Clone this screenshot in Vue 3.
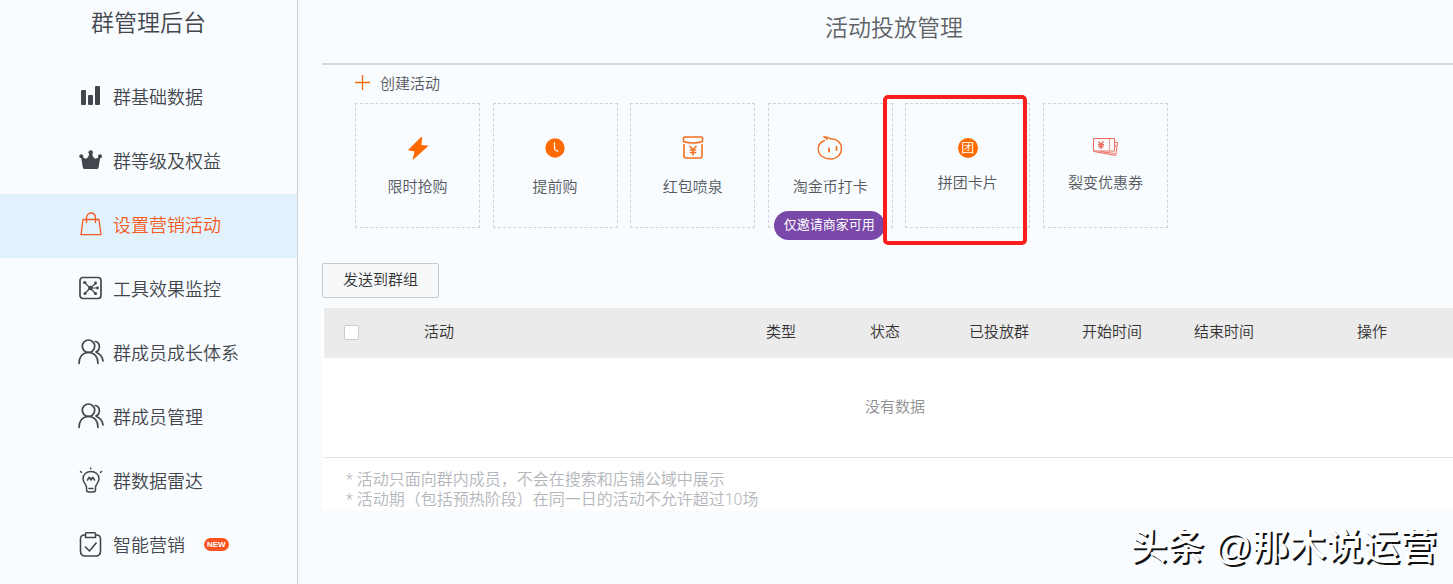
<template>
  <div class="layout">
    <aside class="sidebar">
      <h1 class="logo">群管理后台</h1>
      <nav>
        <a
          v-for="item in menu"
          :key="item.label"
          href="#"
          class="menu-item"
          :class="{ active: item.label === current }"
          @click.prevent="current = item.label"
        >
          <svg v-if="item.icon === 'chart'" class="menu-icon" viewBox="0 0 26 26">
            <g fill="currentColor">
              <rect x="3" y="7" width="5" height="15" rx="1" />
              <rect x="10" y="12" width="5" height="10" rx="1" />
              <rect x="17" y="3" width="5" height="19" rx="1" />
            </g>
          </svg>
          <svg v-else-if="item.icon === 'crown'" class="menu-icon" viewBox="0 0 26 26">
            <g fill="currentColor">
              <circle cx="12.700" cy="5.500" r="2.300" />
              <circle cx="3.300" cy="9.300" r="2" />
              <circle cx="22" cy="9.300" r="2" />
              <path d="M3 9.500l4.700 2.300c1.600-.3 3-2.300 3.700-5.300h2.600c.7 3 2 5 3.700 5.300L22.400 9.500 20.600 20.500q-.3 1.500-1.700 1.500H6.500q-1.400 0-1.700-1.500z" />
            </g>
          </svg>
          <svg v-else-if="item.icon === 'bag'" class="menu-icon" viewBox="0 0 26 26">
            <g fill="none" stroke="currentColor" stroke-width="1.300" stroke-linejoin="round" stroke-linecap="round">
              <path d="M5 8.500h16l2 15.200H3z" />
              <path d="M8.500 11.500V7.200C8.500 4 10.300 2 13 2s4.500 2 4.500 5.200v4.300" />
            </g>
          </svg>
          <svg v-else-if="item.icon === 'tool'" class="menu-icon" viewBox="0 0 26 26">
            <rect x="2" y="2.500" width="21" height="21" rx="3" fill="none" stroke="currentColor" stroke-width="1.700" />
            <path d="M6.500 7.500L12 13l6.500-5M12 13l-5 5.500M12 13l6 6M12 13h8" fill="none" stroke="currentColor" stroke-width="1.200" />
            <g fill="currentColor">
              <circle cx="12.500" cy="13" r="2.300" />
              <circle cx="6.700" cy="7.500" r="1.600" />
              <circle cx="17.500" cy="8" r="1.400" />
              <circle cx="7" cy="18.500" r="1.500" />
              <circle cx="17.500" cy="18.500" r="1.600" />
              <circle cx="19.500" cy="13" r="1.400" />
            </g>
          </svg>
          <svg v-else-if="item.icon === 'users'" class="menu-icon" viewBox="0 0 26 26">
            <g fill="none" stroke="currentColor" stroke-width="1.700" stroke-linecap="round">
              <circle cx="10.500" cy="7.200" r="6.200" />
              <path d="M1 24.500c0-6.500 3.500-11 9.500-11s9.500 4.500 9.500 11" />
              <path d="M17.300 2.500c5 .7 5.500 8.500.7 10.500M18.500 13.500c4 1.500 6 4.500 6.500 8.500" />
            </g>
          </svg>
          <svg v-else-if="item.icon === 'bulb'" class="menu-icon" viewBox="0 0 26 26">
            <g fill="none" stroke="currentColor" stroke-width="1.500" stroke-linecap="round" stroke-linejoin="round">
              <path d="M8.500 20.500C8.500 17 5 16 5 11.800 5 7.500 8.500 4.500 13 4.500s8 3 8 7.300c0 4.200-3.500 5.200-3.500 8.700v2q0 2.500-2.500 2.500h-4q-2.500 0-2.500-2.500z" />
              <path d="M9.500 13l1.800-2.800L13 13l1.700-2.800L16.500 13M11 21.500h4" />
              <path d="M12.700 1v.7M2.500 4.500l1 .8M23.500 4.500l-1 .8" />
            </g>
          </svg>
          <svg v-else class="menu-icon" viewBox="0 0 26 26">
            <g fill="none" stroke="currentColor" stroke-width="1.600" stroke-linejoin="round">
              <path d="M8 4H6.500Q2.500 4 2.500 8v12q0 5 5 5h10q5 0 5-5V8q0-4-4-4H17" />
              <path d="M8.500 1.800h8q1 0 1 1v3.700H7.500V2.800q0-1 1-1z" />
              <path d="M7 15.500l4.500 4.500 7-8.500" />
            </g>
          </svg>
          <span>{{ item.label }}</span>
          <em v-if="item.isNew" class="new-tag">NEW</em>
        </a>
      </nav>
    </aside>

    <main class="main">
      <div class="page">
        <header class="page-header">
          <h2>活动投放管理</h2>
        </header>

        <section class="create">
          <h3 class="create-title">
            <svg class="plus" viewBox="0 0 15 15"><path d="M7.500 0v15M0 7.500h15" stroke="#f56a0b" stroke-width="1.300" /></svg>
            创建活动
          </h3>
          <div class="cards">
            <button v-for="card in cards" :key="card.label" type="button" class="card" :class="card.icon">
              <svg v-if="card.icon === 'flash'" class="card-icon" viewBox="0 0 26 26">
                <path d="M15.800 2.300L3.500 14.600q-.4.700.4.900l5.700.9-2 7.500q.2.900 1 .4L22.800 11.400q.5-.8-.4-.9l-6.100-.4.900-7.300q-.3-1.100-1.400-.5z" fill="#ff6a00" />
              </svg>
              <svg v-else-if="card.icon === 'clock'" class="card-icon" viewBox="0 0 26 26">
                <circle cx="13" cy="13" r="9.700" fill="#ff6a00" />
                <path d="M12.500 8v5.200q.2 2 3.300 3" fill="none" stroke="#fff" stroke-width="1.300" stroke-linecap="round" />
              </svg>
              <svg v-else-if="card.icon === 'packet'" class="card-icon" viewBox="0 0 26 26">
                <g fill="none" stroke="#f37021" stroke-width="1.600" stroke-linejoin="round" stroke-linecap="round">
                  <path d="M4.500 2h17q1 0 1 1v3.500Q18 8 13 8T3.500 6.500V3q0-1 1-1z" />
                  <path d="M4 9.500V21q0 2 2 2h14q2 0 2-2V9.500" />
                  <path d="M10 11.500l3 3 3-3M13 14.500V20M10.500 15h5M10.500 17.500h5" />
                </g>
              </svg>
              <svg v-else-if="card.icon === 'coin'" class="card-icon" viewBox="0 0 26 26">
                <g fill="none" stroke="#f37021" stroke-width="1.400" stroke-linecap="round">
                  <path d="M7.500 5.500C3 7.500 1 11 1.300 14.500 1.700 20.500 7 24 13.500 24c6.300 0 11-4.300 11-10.500 0-6-4.700-9.700-10-9.500-2.500-.2-4.500-3-8-2 2.500.2 2.300 1.800 3.800 2.300" />
                  <path d="M12 13.500v3M19.500 12v3" stroke-width="1.800" />
                </g>
              </svg>
              <span v-else-if="card.icon === 'group'" class="group-icon">团</span>
              <svg v-else class="card-icon" viewBox="0 0 26 26">
                <g fill="none" stroke="#ee6a5c" stroke-width="1" stroke-linejoin="round">
                  <path d="M1.500 3.500h21V16H1.500z" />
                  <path d="M17.500 3.500V16" stroke-dasharray="2 1" />
                  <path d="M23 7l2.500.6L23.700 20.500 2 16.500M22.700 11l2 .3M22.500 18.500L8 16.500" />
                  <path d="M6.500 6.500L9 9.500l2.500-3M9 9.500V14M6 9.700h6M6.500 11.800h5" stroke-width="1.400" />
                </g>
              </svg>
              <span class="card-label">{{ card.label }}</span>
              <span v-if="card.badge" class="badge">{{ card.badge }}</span>
              <i v-if="card.marked" class="marker"></i>
            </button>
          </div>
        </section>

        <button type="button" class="send-btn">发送到群组</button>

        <section class="panel">
          <table class="table">
            <colgroup>
              <col class="col-check" />
              <col />
              <col class="col-type" />
              <col class="col-status" />
              <col class="col-groups" />
              <col class="col-start" />
              <col class="col-end" />
              <col class="col-action" />
            </colgroup>
            <thead>
              <tr>
                <th><input v-model="allChecked" type="checkbox" aria-label="全选" /></th>
                <th class="name">活动</th>
                <th v-for="col in columns" :key="col">{{ col }}</th>
              </tr>
            </thead>
            <tbody>
              <tr>
                <td colspan="8">没有数据</td>
              </tr>
            </tbody>
          </table>
          <div class="notes">
            <p>* 活动只面向群内成员，不会在搜索和店铺公域中展示</p>
            <p>* 活动期（包括预热阶段）在同一日的活动不允许超过10场</p>
          </div>
        </section>
      </div>
    </main>

    <div class="watermark">头条 @那木说运营</div>
  </div>
</template>

<script setup>
import { ref } from 'vue'

const current = ref('设置营销活动')
const allChecked = ref(false)

const menu = [
  { label: '群基础数据', icon: 'chart' },
  { label: '群等级及权益', icon: 'crown' },
  { label: '设置营销活动', icon: 'bag' },
  { label: '工具效果监控', icon: 'tool' },
  { label: '群成员成长体系', icon: 'users' },
  { label: '群成员管理', icon: 'users' },
  { label: '群数据雷达', icon: 'bulb' },
  { label: '智能营销', icon: 'clipboard', isNew: true }
]

const cards = [
  { label: '限时抢购', icon: 'flash' },
  { label: '提前购', icon: 'clock' },
  { label: '红包喷泉', icon: 'packet' },
  { label: '淘金币打卡', icon: 'coin', badge: '仅邀请商家可用' },
  { label: '拼团卡片', icon: 'group', marked: true },
  { label: '裂变优惠券', icon: 'coupon' }
]

const columns = ['类型', '状态', '已投放群', '开始时间', '结束时间', '操作']
</script>

<style>
body {
  background: #f8fcff;
}
</style>

<style scoped>
.layout {
  position: relative;
  display: flex;
  min-height: 100vh;
  overflow: hidden;
  background: #f8fcff;
  color: #43474d;
  font-family: "Noto Sans CJK SC", "Liberation Sans", sans-serif;
  font-weight: 350;
}

.layout * {
  box-sizing: border-box;
}

h1,
h2,
h3,
p {
  margin: 0;
  font-weight: 350;
}

button {
  font: inherit;
  color: inherit;
  cursor: pointer;
}

.sidebar {
  flex: 0 0 298px;
  border-right: 1px solid #cdd2d8;
}

.logo {
  height: 66px;
  padding-top: 3px;
  text-align: center;
  font-size: 23px;
  line-height: 36px;
}

.menu-item {
  display: flex;
  align-items: center;
  height: 64px;
  padding: 0 0 4px 78px;
  font-size: 18px;
  color: #43474d;
  text-decoration: none;
}

.menu-item.active {
  background: #e2f2fd;
  color: #f55a23;
}

.menu-icon {
  width: 26px;
  height: 26px;
  margin-right: 9px;
}

.new-tag {
  margin-left: 19px;
  padding: 0 3px;
  border-radius: 7px;
  background: #f9541f;
  color: #fff;
  font: bold 8px/13px "Liberation Sans", sans-serif;
}

.main {
  flex: 1;
  min-width: 0;
  padding-left: 24px;
}

.page {
  margin-right: -13px;
}

.page-header {
  height: 65px;
  padding-top: 8px;
  border-bottom: 2px solid #d0d6dc;
  text-align: center;
  color: #606266;
}

.page-header h2 {
  font-size: 23px;
  line-height: 36px;
}

.create {
  padding-left: 33px;
}

.create-title {
  display: flex;
  align-items: center;
  height: 38px;
  padding-bottom: 4px;
  gap: 10px;
  font-size: 15px;
  color: #55585d;
}

.plus {
  width: 15px;
  height: 15px;
}

.cards {
  display: flex;
  justify-content: space-between;
  max-width: 813px;
}

.card {
  position: relative;
  display: flex;
  flex-direction: column;
  align-items: center;
  width: 125px;
  height: 125px;
  padding: 31px 0 0;
  border: 1px dashed #ccd3dc;
  background: transparent;
  font-size: 15px;
  line-height: 22px;
  color: #55585d;
}

.card-icon {
  width: 26px;
  height: 26px;
}

.card-label {
  margin-top: 14px;
}

.group .card-label,
.coupon .card-label {
  margin-top: 10px;
}

.group-icon {
  width: 20px;
  height: 20px;
  margin: 3px;
  border-radius: 50%;
  background: #ff6a00;
  color: #fff;
  font-size: 13px;
  line-height: 18px;
}

.badge {
  position: absolute;
  left: 5px;
  bottom: -13px;
  height: 29px;
  padding: 0 10px;
  border-radius: 15px;
  background: #7a48a8;
  color: #fff;
  font-size: 13px;
  font-weight: 400;
  line-height: 26px;
  white-space: nowrap;
}

.marker {
  position: absolute;
  z-index: 1;
  top: -9px;
  left: -23px;
  width: 144px;
  height: 150px;
  border: 4px solid #fb1f1c;
  border-radius: 5px;
}

.send-btn {
  display: block;
  height: 35px;
  margin: 35px 0 10px;
  padding: 0 20px 4px;
  border: 1px solid #c6c9d3;
  border-radius: 2px;
  background: #f7f8fa;
  color: #333;
  font-size: 15px;
  line-height: 22px;
}

.panel {
  padding-left: 2px;
  background: #fff;
}

.table {
  width: 100%;
  table-layout: fixed;
  border-collapse: collapse;
  font-size: 15px;
}

.col-check {
  width: 54px;
}

.col-type {
  width: 90px;
}

.col-status {
  width: 118px;
}

.col-groups {
  width: 110px;
}

.col-start {
  width: 116px;
}

.col-end {
  width: 108px;
}

.col-action {
  width: 188px;
}

.table th {
  height: 50px;
  padding: 0 0 5px;
  background: #ebebeb;
  color: #333;
  font-weight: 350;
}

.table .name {
  padding-left: 46px;
  text-align: left;
}

.table td {
  height: 99px;
  padding: 0 0 3px;
  border-bottom: 1px solid #e3e3e3;
  text-align: center;
  color: #8f8f8f;
}

.table input {
  display: block;
  appearance: none;
  width: 15px;
  height: 15px;
  margin: 4px auto 0;
  border: 1px solid #ccc;
  border-radius: 2px;
  background: #fff;
}

.table input:checked {
  background: #ff6a00;
}

.notes {
  padding: 12px 0 0 22px;
  font-family: Roboto, "Noto Sans CJK SC", sans-serif;
  font-size: 16px;
  line-height: 20px;
  color: #b3b6bb;
}

.watermark {
  position: absolute;
  right: 16px;
  bottom: 10px;
  color: #fff;
  font-family: "Liberation Sans", "Noto Sans CJK SC", sans-serif;
  font-size: 37px;
  font-weight: 500;
  line-height: 52px;
  text-shadow: 2px 2px 0 #111;
}
</style>
